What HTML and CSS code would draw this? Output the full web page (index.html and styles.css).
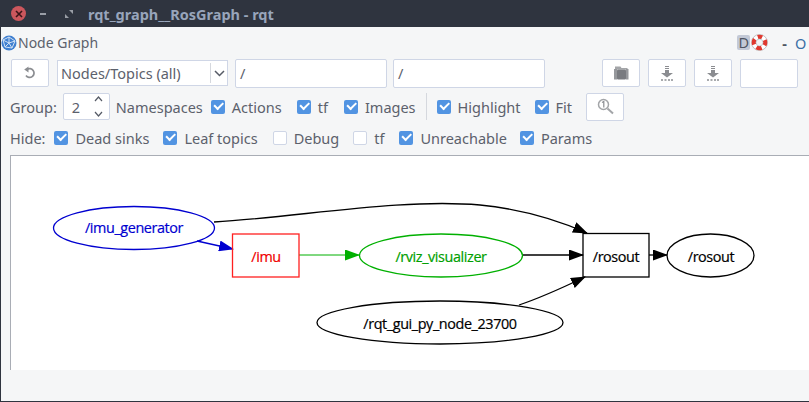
FILE: index.html
```html
<!DOCTYPE html>
<html lang="en">
<head>
    <meta charset="UTF-8">
    <meta name="viewport" content="width=device-width, initial-scale=1.0">
    <title>rqt_graph__RosGraph - rqt</title>
    <link rel="stylesheet" href="styles.css">
</head>
<body>

    <div class="window">
        <div class="titlebar">
            <span class="close-btn"><svg width="8" height="8" viewBox="0 0 8 8"><path d="M1 1L7 7M7 1L1 7" stroke="#3a1518" stroke-width="1.6"/></svg></span>
            <span class="min-btn"></span>
            <svg class="max-btn" width="8" height="8" viewBox="0 0 8 8"><path d="M4 0H8V4ZM0 4V8H4Z" fill="#9a9ea6"/></svg>
            <span class="title">rqt_graph__RosGraph - rqt</span>
        </div>

        <div class="content">
            <div class="dock-title">
                <svg class="globe" width="16" height="16" viewBox="0 0 16 16">
                    <circle cx="8" cy="8" r="7.5" fill="#3f7fd0"/>
                    <path d="M2 5L8 2L14 6L11 13L4 12ZM8 2L8 8L14 6M8 8L11 13M8 8L4 12M8 8L2 5" fill="none" stroke="#cfe0f5" stroke-width="1"/>
                </svg>
                <span class="dock-name">Node Graph</span>
                <span class="dock-d">D</span>
                <svg class="help" width="17" height="17" viewBox="0 0 17 17">
                    <circle cx="8.5" cy="8.5" r="8" fill="#fff" stroke="#b5b2b2" stroke-width="0.8"/>
                    <circle cx="8.5" cy="8.5" r="5.7" fill="none" stroke="#e0382e" stroke-width="4.200" stroke-dasharray="5.400 3.550" stroke-dashoffset="2.700" transform="rotate(-90 8.5 8.5)"/>
                    <circle cx="8.5" cy="8.5" r="3.500" fill="#f4f4f4" stroke="#a9adb3" stroke-width="0.6"/>
                </svg>
                <span class="dock-min">-</span>
                <span class="dock-o">O</span>
            </div>

            <div class="row row-tools">
                <button class="tool tool-reset">
                    <svg width="14" height="14" viewBox="0 0 14 14"><path d="M4 3.5A4.4 4.4 0 1 1 3 9.5" fill="none" stroke="#8b8d91" stroke-width="1.7"/><path d="M5.5 0.5V6.5L1.2 3.5Z" fill="#8b8d91"/></svg>
                </button>
                <div class="combo">
                    <span class="combo-text">Nodes/Topics (all)</span>
                    <span class="combo-arrow"><svg width="11" height="7" viewBox="0 0 11 7"><path d="M1 1L5.5 5.5L10 1" fill="none" stroke="#565b66" stroke-width="1.5"/></svg></span>
                </div>
                <div class="field">/</div>
                <div class="field field-second">/</div>
                <button class="tool tool-open">
                    <svg width="15" height="14" viewBox="0 0 15 14"><path d="M1 0.500H6.500L7.500 2H13.500V3.500H1Z" fill="#a3a5a8"/><path d="M0 3H3V13.500H0ZM12 3H14.500V13.500H12Z" fill="#96989c"/><rect x="3" y="3.500" width="9" height="10" rx="1" fill="#797b80"/></svg>
                </button>
                <button class="tool tool-save">
                    <svg width="14" height="15" viewBox="0 0 14 15"><path d="M5 0H9V1H5ZM5 2H9V3H5ZM5 4H9V7H13L7 11.5L1 7H5Z" fill="#8b8d91"/><path d="M1 13H3V15H1ZM4.5 13H6.5V15H4.5ZM8 13H10V15H8ZM11 13H13V15H11Z" fill="#a9abae"/></svg>
                </button>
                <button class="tool tool-save">
                    <svg width="14" height="15" viewBox="0 0 14 15"><path d="M5 0H9V1H5ZM5 2H9V3H5ZM5 4H9V7H13L7 11.5L1 7H5Z" fill="#8b8d91"/><path d="M1 13H3V15H1ZM4.5 13H6.5V15H4.5ZM8 13H10V15H8ZM11 13H13V15H11Z" fill="#a9abae"/></svg>
                </button>
                <button class="tool tool-blank"></button>
            </div>

            <div class="row row-group">
                <span class="lbl">Group:</span>
                <div class="spin">
                    <span class="spin-value">2</span>
                    <span class="spin-arrows">
                        <svg width="9" height="6" viewBox="0 0 9 6"><path d="M1 5L4.5 1L8 5" fill="none" stroke="#565b66" stroke-width="1.2"/></svg>
                        <svg width="9" height="6" viewBox="0 0 9 6"><path d="M1 1L4.5 5L8 1" fill="none" stroke="#565b66" stroke-width="1.2"/></svg>
                    </span>
                </div>
                <span class="lbl lbl-ns">Namespaces</span>
                <label class="check check-actions"><span class="box on"></span>Actions</label>
                <label class="check check-tf"><span class="box on"></span>tf</label>
                <label class="check check-images"><span class="box on"></span>Images</label>
                <span class="sep"></span>
                <label class="check check-highlight"><span class="box on"></span>Highlight</label>
                <label class="check check-fit"><span class="box on"></span>Fit</label>
                <button class="tool tool-zoom">
                    <svg width="17" height="17" viewBox="0 0 17 17"><circle cx="6.5" cy="6.5" r="5" fill="none" stroke="#a3a5a8" stroke-width="1.5"/><path d="M10.5 10.5L16 15.5" stroke="#a3a5a8" stroke-width="2"/><path d="M5 4.5L6.8 3.5V9.5" fill="none" stroke="#8b8d91" stroke-width="1.2"/></svg>
                </button>
            </div>

            <div class="row row-hide">
                <span class="lbl">Hide:</span>
                <label class="check check-sinks"><span class="box on"></span>Dead sinks</label>
                <label class="check check-leaf"><span class="box on"></span>Leaf topics</label>
                <label class="check check-debug"><span class="box"></span>Debug</label>
                <label class="check check-tf2"><span class="box"></span>tf</label>
                <label class="check check-unreach"><span class="box on"></span>Unreachable</label>
                <label class="check check-params"><span class="box on"></span>Params</label>
            </div>

            <div class="canvas">
                <svg class="graph" width="798" height="214" viewBox="11 156 798 214">
                    <defs>
                        <marker id="headBlack" markerWidth="15" markerHeight="11" refX="14" refY="5.5" orient="auto" markerUnits="userSpaceOnUse"><path d="M0 0L15 5.5L0 11Z" fill="#000"/></marker>
                        <marker id="headBlue" markerWidth="15" markerHeight="11" refX="14" refY="5.5" orient="auto" markerUnits="userSpaceOnUse"><path d="M0 0L15 5.5L0 11Z" fill="#0000d0"/></marker>
                        <marker id="headGreen" markerWidth="15" markerHeight="11" refX="14" refY="5.5" orient="auto" markerUnits="userSpaceOnUse"><path d="M0 0L15 5.5L0 11Z" fill="#00b000"/></marker>
                    </defs>

                    <path class="edge" d="M214 222C300 217 400 198 480 205C520 209 555 219 587 233" marker-end="url(#headBlack)"/>
                    <path class="edge edge-blue" d="M197 241L233 249" marker-end="url(#headBlue)"/>
                    <path class="edge edge-green" d="M299 255H359" marker-end="url(#headGreen)"/>
                    <path class="edge" d="M523 255H583" marker-end="url(#headBlack)"/>
                    <path class="edge" d="M519 305C540 298 562 288 585 277" marker-end="url(#headBlack)"/>
                    <path class="edge" d="M649 255H667" marker-end="url(#headBlack)"/>

                    <ellipse class="node node-blue" cx="134" cy="228" rx="80.5" ry="21.5"/>
                    <rect class="node node-red" x="232.5" y="234" width="66.5" height="43"/>
                    <ellipse class="node node-green" cx="441" cy="255.500" rx="81.5" ry="21.5"/>
                    <rect class="node" x="583" y="233.500" width="66" height="43.500"/>
                    <ellipse class="node" cx="710.500" cy="255.500" rx="43.500" ry="21.500"/>
                    <ellipse class="node" cx="440" cy="322.500" rx="123" ry="21.500"/>

                    <text class="node-text text-blue" x="134" y="233">/imu_generator</text>
                    <text class="node-text text-red" x="266" y="262">/imu</text>
                    <text class="node-text text-green" x="441" y="262">/rviz_visualizer</text>
                    <text class="node-text" x="616" y="262">/rosout</text>
                    <text class="node-text" x="711" y="262">/rosout</text>
                    <text class="node-text" x="440" y="329">/rqt_gui_py_node_23700</text>
                </svg>
            </div>
        </div>
    </div>

</body>
</html>
```

FILE: styles.css
```css
html, body {
    margin: 0;
    padding: 0;
}

body {
    font-family: "Noto Sans", "Open Sans", sans-serif;
    font-size: 14.5px;
    color: #5c616c;
    background-color: #2f343f;
}

.window {
    width: 809px;
    height: 402px;
    display: flex;
    flex-direction: column;
    overflow: hidden;
}

/* title bar */
.titlebar {
    height: 27px;
    flex: none;
    display: flex;
    align-items: center;
    background-color: #2f343f;
    padding-left: 11px;
}

.close-btn {
    width: 15px;
    height: 15px;
    border-radius: 50%;
    background-color: #cc575d;
    display: flex;
    align-items: center;
    justify-content: center;
}

.min-btn {
    width: 6px;
    height: 2px;
    background-color: #9a9ea6;
    margin-left: 14px;
}

.max-btn {
    margin-left: 19px;
}

.title {
    margin-left: 15px;
    font-weight: 700;
    font-size: 14.5px;
    color: #98a5bb;
}

.content {
    flex: 1;
    display: flex;
    flex-direction: column;
    margin-left: 1px;
    margin-bottom: 1px;
    background-color: #f5f6f7;
}

/* dock title */
.dock-title {
    height: 31px;
    flex: none;
    display: flex;
    align-items: center;
}

.globe {
    flex: none;
}

.dock-name {
    margin-left: 1px;
    font-size: 14px;
}

.dock-d {
    margin-left: auto;
    width: 13px;
    height: 15px;
    line-height: 15px;
    text-align: center;
    border-radius: 2px;
    background-color: #c3c9d6;
    color: #4f5562;
}

.help {
    margin-left: 1px;
}

.dock-min {
    margin-left: 14px;
    font-weight: 700;
    color: #4f5562;
}

.dock-o {
    margin-left: 8px;
    margin-right: 4px;
    width: 10px;
    color: #3a6ea5;
}

/* rows */
.row {
    display: flex;
    align-items: center;
    flex: none;
    padding-left: 9px;
}

.row-tools {
    height: 30px;
    padding-left: 10px;
}

.row-group {
    height: 35px;
    margin-top: 1px;
}

.row-hide {
    height: 23px;
    margin-top: 2px;
}

.tool {
    box-sizing: border-box;
    height: 28px;
    padding: 0;
    border: 1px solid #cfd6e6;
    border-radius: 2px;
    background-color: #fff;
    display: flex;
    align-items: center;
    justify-content: center;
}

.tool-reset {
    width: 38px;
}

.tool-open {
    width: 38px;
    margin-left: 57px;
}

.tool-save {
    width: 38px;
    margin-left: 8px;
}

.tool-blank {
    width: 58px;
    height: 29px;
    margin-left: 8px;
}

.tool-zoom {
    width: 38px;
    margin-left: 14px;
}

.combo {
    box-sizing: border-box;
    width: 171px;
    height: 26px;
    margin-left: 8px;
    border: 1px solid #cfd6e6;
    background-color: #fff;
    display: flex;
    align-items: center;
    padding-left: 3px;
}

.combo-text {
    flex: 1;
}

.combo-arrow {
    width: 16px;
    height: 20px;
    border-left: 1px solid #d5d8de;
    display: flex;
    align-items: center;
    justify-content: center;
}

.field {
    box-sizing: border-box;
    width: 152px;
    height: 29px;
    line-height: 27px;
    margin-left: 7px;
    padding-left: 4px;
    border: 1px solid #cfd6e6;
    border-radius: 2px;
    background-color: #fff;
}

.field-second {
    margin-left: 6px;
}

.spin {
    box-sizing: border-box;
    width: 47px;
    height: 27px;
    margin-left: 6px;
    border: 1px solid #cfd6e6;
    border-radius: 2px;
    background-color: #fff;
    display: flex;
    align-items: center;
}

.spin-value {
    flex: 1;
    padding-left: 8px;
}

.spin-arrows {
    width: 20px;
    display: flex;
    flex-direction: column;
    align-items: center;
    gap: 9px;
}

.lbl-ns {
    margin-left: 6px;
}

.check {
    display: flex;
    align-items: center;
}

.box {
    box-sizing: border-box;
    width: 14px;
    height: 14px;
    margin-right: 7px;
    border: 1px solid #cfd6e6;
    border-radius: 2px;
    background-color: #fff;
}

.box.on {
    border: none;
    background-color: #5294e2;
    position: relative;
}

.box.on::after {
    content: "";
    position: absolute;
    left: 3px;
    top: 2.5px;
    width: 7px;
    height: 3.5px;
    border-left: 2px solid #fff;
    border-bottom: 2px solid #fff;
    transform: rotate(-45deg);
}

.check-actions {
    margin-left: 8px;
}

.check-tf {
    margin-left: 15px;
}

.check-images {
    margin-left: 16px;
}

.sep {
    width: 1px;
    height: 27px;
    margin-left: 10px;
    background-color: #d5d8de;
}

.check-highlight {
    margin-left: 10px;
}

.check-fit {
    margin-left: 14px;
}

.check-sinks {
    margin-left: 9px;
}

.check-leaf {
    margin-left: 14px;
}

.check-debug {
    margin-left: 15px;
}

.check-tf2 {
    margin-left: 14px;
}

.check-unreach {
    margin-left: 15px;
}

.check-params {
    margin-left: 13px;
}

/* graph */
.canvas {
    flex: none;
    height: 214px;
    margin-top: 6px;
    margin-left: 9px;
    border-top: 1px solid #a9adb5;
    border-left: 1px solid #a9adb5;
    background-color: #fff;
}

.graph {
    display: block;
}

.edge {
    fill: none;
    stroke: #000;
    stroke-width: 1.3;
}

.edge-blue {
    stroke: #0000d0;
}

.edge-green {
    stroke: #00b000;
    stroke-width: 1;
}

.node {
    fill: none;
    stroke: #000;
    stroke-width: 1.3;
}

.node-blue {
    stroke: #0000d0;
}

.node-red {
    stroke: #ff2020;
}

.node-green {
    stroke: #00b000;
}

.node-text {
    font-family: "Open Sans", "Noto Sans", sans-serif;
    font-size: 14.4px;
    letter-spacing: -0.4px;
    text-anchor: middle;
    fill: #000;
    stroke: #000;
    stroke-width: 0.2;
}

.text-blue {
    fill: #0000d0;
    stroke: #0000d0;
}

.text-red {
    fill: #f00000;
    stroke: #f00000;
}

.text-green {
    fill: #00a000;
    stroke: #00a000;
}
```
